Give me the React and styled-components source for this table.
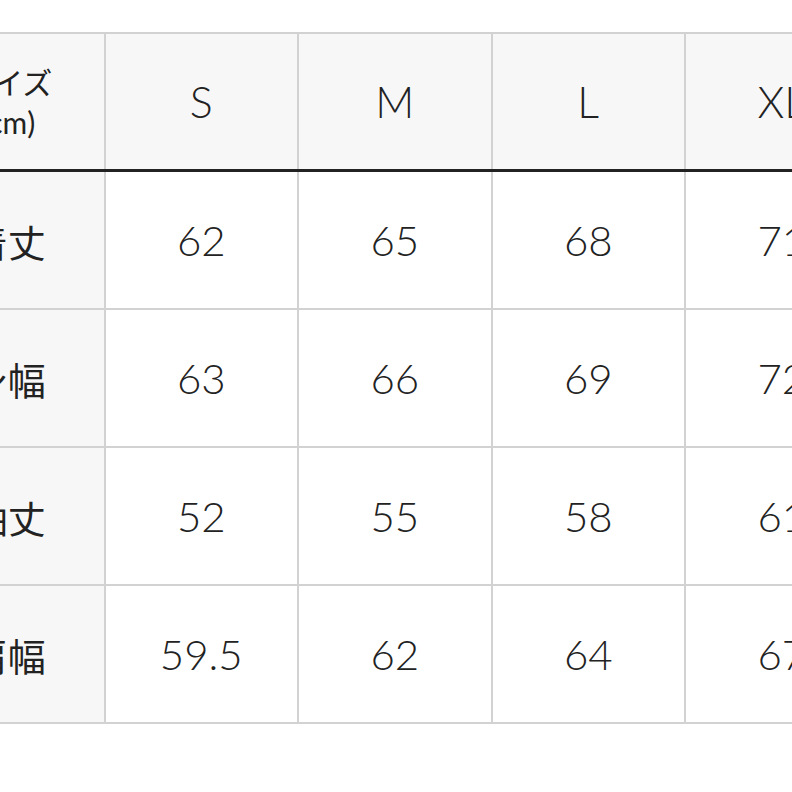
import React from "react";
import styled, { createGlobalStyle } from "styled-components";

const GlobalStyle = createGlobalStyle`
  html, body {
    margin: 0;
    padding: 0;
    background: #ffffff;
    overflow: hidden;
  }
  body {
    font-family: "Lato", "Noto Sans CJK JP", sans-serif;
    color: #222222;
  }
`;

const Page = styled.div`
  width: 792px;
  height: 792px;
  overflow: hidden;
  padding-top: 32px;
  box-sizing: border-box;
`;

const Table = styled.table`
  border-collapse: collapse;
  table-layout: fixed;
  margin-left: -90px;
  width: ${(p) => p.$cols * 193.5}px;
`;

const HeadCell = styled.th`
  width: 191.5px;
  height: 135px;
  padding: 0;
  background: #f7f7f7;
  border: 2px solid #d2d2d2;
  border-bottom: 3px solid #222222;
  font-weight: ${(p) => (p.$label ? 400 : 300)};
  font-size: ${(p) => (p.$label ? "30px" : "43px")};
  line-height: ${(p) => (p.$label ? "40px" : "1")};
  text-align: center;
  vertical-align: middle;
`;

const Cell = styled.td`
  height: 136px;
  padding: 0;
  background: ${(p) => (p.$label ? "#f7f7f7" : "#ffffff")};
  border: 2px solid #d2d2d2;
  font-size: ${(p) => (p.$label ? "38px" : "42px")};
  font-weight: ${(p) => (p.$label ? 400 : 300)};
  text-align: center;
  vertical-align: middle;
`;

const sizes = ["S", "M", "L", "XL"];

const rows = [
  { label: "着丈", values: ["62", "65", "68", "71"] },
  { label: "身幅", values: ["63", "66", "69", "72"] },
  { label: "袖丈", values: ["52", "55", "58", "61"] },
  { label: "肩幅", values: ["59.5", "62", "64", "67"] },
];

export default function App() {
  return (
    <>
      <GlobalStyle />
      <Page>
        <Table $cols={sizes.length + 1}>
          <thead>
            <tr>
              <HeadCell $label>
                サイズ
                <br />
                (cm)
              </HeadCell>
              {sizes.map((s) => (
                <HeadCell key={s}>{s}</HeadCell>
              ))}
            </tr>
          </thead>
          <tbody>
            {rows.map((r) => (
              <tr key={r.label}>
                <Cell $label>{r.label}</Cell>
                {r.values.map((v, i) => (
                  <Cell key={i}>{v}</Cell>
                ))}
              </tr>
            ))}
          </tbody>
        </Table>
      </Page>
    </>
  );
}
